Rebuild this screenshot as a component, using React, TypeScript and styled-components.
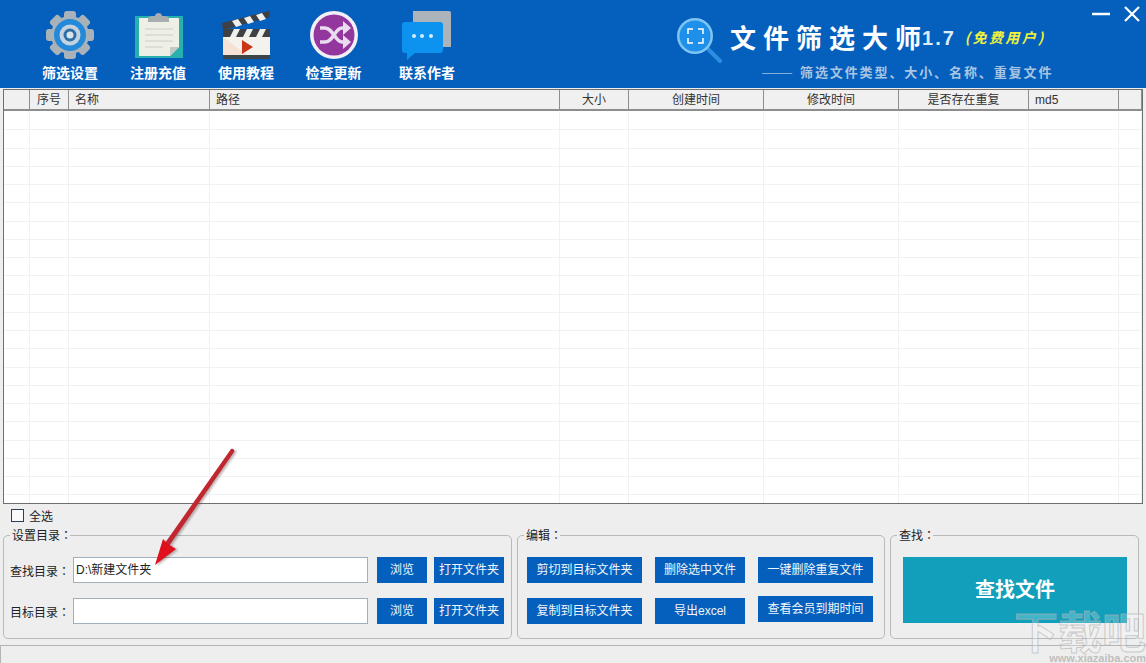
import React from 'react';
import styled, { createGlobalStyle } from 'styled-components';

const GlobalStyle = createGlobalStyle`
  html, body {
    margin: 0;
    padding: 0;
    background: #eeeeee;
  }
  body {
    font-family: 'Liberation Sans', 'Noto Sans CJK SC', sans-serif;
    font-size: 12px;
    color: #222;
  }
`

const Window = styled.div`
  position: relative;
  width: 1146px;
  height: 663px;
  overflow: hidden;
  background: #eeeeee;
  display: flex;
  flex-direction: column;
`

const Header = styled.div`
  position: relative;
  height: 88px;
  flex: none;
  background: #0560bd;
  display: flex;
  padding-left: 26px;
`

const ToolItem = styled.div<{ $w: number }>`
  width: ${p => p.$w}px;
  display: flex;
  flex-direction: column;
  align-items: center;
  flex: none;

  & svg {
    margin-top: 10px;
    height: 50px;
    width: 54px;
  }

  & span {
    margin-top: 5px;
    color: #fff;
    font-size: 14px;
    font-weight: 700;
    line-height: 16px;
    white-space: nowrap;
  }
`

const Logo = styled.div`
  margin-left: auto;
  width: 470px;
  flex: none;
  display: flex;
  flex-direction: column;
`

const LogoTop = styled.div`
  display: flex;
  align-items: center;
  height: 50px;
  margin-top: 14px;

  & svg {
    width: 48px;
    height: 50px;
    flex: none;
  }
`

const LogoTitle = styled.div`
  margin: 0 0 6px 6px;
  color: #fff;
  font-family: 'Noto Sans CJK SC', sans-serif;
  font-size: 26px;
  font-weight: 700;
  letter-spacing: 7px;
  white-space: nowrap;
`

const Version = styled.span`
  font-family: 'Liberation Sans', sans-serif;
  font-size: 20px;
  letter-spacing: 2px;
  margin-left: -6px;
  color: #dcecf8;
  vertical-align: 3px;
`

const Edition = styled.span`
  margin-left: 9px;
  color: #f2f23c;
  font-size: 14px;
  font-style: italic;
  letter-spacing: 2.4px;
  vertical-align: 5px;
`

const LogoSub = styled.div`
  margin-top: -2px;
  margin-left: 86px;
  color: #a9c5e2;
  font-size: 13px;
  font-weight: 700;
  letter-spacing: 1.9px;
  white-space: nowrap;
`

const SubDash = styled.span`
  font-size: 15px;
  font-weight: 400;
  letter-spacing: 0;
  margin-right: 8px;
  color: #86aeda;
`

const WinButtons = styled.div`
  position: absolute;
  top: 5px;
  right: 5px;
  display: flex;
  gap: 13px;
  align-items: center;

  & svg {
    width: 18px;
    height: 18px;
  }
`

const Table = styled.div`
  margin: 1px 3px 0 3px;
  height: 415px;
  flex: none;
  background: #fff;
  border: 1px solid #6f6f6f;
  overflow: hidden;
  box-sizing: border-box;
`

const cols = '26px 39px 141px 350px 69px 135px 135px 130px 90px 1fr'

const HeaderRow = styled.div`
  display: grid;
  grid-template-columns: ${cols};
  height: 21px;
  background: #f0f0f0;
  border-bottom: 2px solid #8e8e8e;
  box-sizing: border-box;
`

const HeaderCell = styled.div<{ $left?: boolean }>`
  border-right: 1px solid #8e8e8e;
  font-size: 12px;
  line-height: 21px;
  color: #333;
  text-align: ${p => (p.$left ? 'left' : 'center')};
  padding-left: ${p => (p.$left ? '6px' : '0')};
  box-sizing: border-box;
  white-space: nowrap;
`

const Rows = styled.div`
  padding-top: 1px;
`

const Row = styled.div`
  display: grid;
  grid-template-columns: ${cols};
  height: 18.25px;
  border-bottom: 1px solid #f1f1f1;
  box-sizing: border-box;
`

const Cell = styled.div`
  border-right: 1px solid #f1f1f1;
`

const SelectAll = styled.label`
  display: flex;
  align-items: center;
  height: 24px;
  padding: 0 0 2px 11px;
  box-sizing: border-box;
  gap: 5px;
  font-size: 12px;
  flex: none;
`

const CheckBox = styled.span`
  width: 11px;
  height: 11px;
  border: 1px solid #2b3f5a;
  background: #fafafa;
  display: block;
`

const Panels = styled.div`
  display: flex;
  padding-left: 3px;
  gap: 5px;
  flex: none;
  height: 116px;
`

const Panel = styled.fieldset<{ $w: number }>`
  width: ${p => p.$w}px;
  margin: 0;
  padding: 0;
  border: 1px solid #b9b9b9;
  border-radius: 5px;
  box-sizing: border-box;
  height: 111px;
  min-width: 0;
`

const Legend = styled.legend`
  padding: 0 2px;
  margin-left: 6px;
  font-size: 12px;
  line-height: 14px;
  white-space: nowrap;
`

const Colon = styled.span`
  font-family: 'Noto Sans CJK TC', sans-serif;
  margin-right: -4px;
`

const DirRows = styled.div`
  display: flex;
  flex-direction: column;
  gap: 15px;
  padding: 14px 0 0 6px;
`

const DirRow = styled.div`
  display: flex;
  align-items: center;
  height: 26px;
`

const DirLabel = styled.div`
  width: 63px;
  flex: none;
  font-size: 12px;
`

const TextBox = styled.div`
  width: 295px;
  height: 26px;
  flex: none;
  box-sizing: border-box;
  background: #fff;
  border: 1px solid #9eb0bd;
  font-size: 12px;
  line-height: 24px;
  padding-left: 2px;
  color: #222;
`

const BlueButton = styled.div<{ $w: number; $ml?: number; $up?: number }>`
  width: ${p => p.$w}px;
  margin-left: ${p => p.$ml ?? 0}px;
  margin-top: ${p => -(p.$up ?? 0)}px;
  height: 26px;
  flex: none;
  background: #0560bd;
  color: #f2f6fb;
  font-size: 12px;
  line-height: 26px;
  text-align: center;
  white-space: nowrap;
`

const EditGrid = styled.div`
  display: grid;
  grid-template-columns: 115px 90px 115px;
  column-gap: 13px;
  row-gap: 15px;
  align-items: start;
  padding: 14px 0 0 9px;
`

const SearchButton = styled.div`
  margin: 14px 0 0 12px;
  width: 224px;
  height: 66px;
  background: #119fbb;
  color: #fff;
  font-size: 20px;
  font-weight: 700;
  line-height: 66px;
  text-align: center;
`

const StatusBar = styled.div`
  flex: none;
  height: 18px;
  margin-top: 1px;
  border-top: 1px solid #b4b4b4;
  border-left: 1px solid #b4b4b4;
`

const Arrow = styled.svg`
  position: absolute;
  left: 140px;
  top: 440px;
  width: 110px;
  height: 140px;
  pointer-events: none;
  filter: drop-shadow(2px 1px 1px rgba(90, 60, 60, 0.4));
`

const Watermark = styled.div`
  position: absolute;
  right: 0;
  bottom: 0;
  text-align: right;
  font-family: 'Noto Sans CJK SC', sans-serif;
  pointer-events: none;

  & b {
    display: block;
    font-size: 44px;
    line-height: 46px;
    font-weight: 700;
    color: rgba(255, 255, 255, 0.22);
    -webkit-text-stroke: 1px rgba(175, 175, 175, 0.6);
  }

  & i {
    display: block;
    font-family: 'Liberation Sans', sans-serif;
    font-style: normal;
    font-weight: 700;
    font-size: 11px;
    line-height: 10px;
    color: rgba(175, 175, 175, 0.75);
  }
`

const GearIcon = () => (
  <svg viewBox="0 0 54 50">
    <g fill="#a9b1b9">
      {[0, 45, 90, 135, 180, 225, 270, 315].map(a => (
        <rect key={a} x="21" y="1" width="12" height="12" rx="3" transform={`rotate(${a} 27 25)`} />
      ))}
      <circle cx="27" cy="25" r="19" />
    </g>
    <circle cx="27" cy="25" r="16" fill="#2589d9" />
    <circle cx="27" cy="25" r="10.5" fill="#c3d2de" />
    <circle cx="27" cy="25" r="6.5" fill="#2b6fa8" />
    <circle cx="27" cy="25" r="3.5" fill="#dbe4ea" />
  </svg>
)

const ClipboardIcon = () => (
  <svg viewBox="0 0 54 50">
    <rect x="4" y="6" width="48" height="42" fill="#27b0ad" />
    <path d="M8 8h40v29l-9 9H8z" fill="#eef0e6" />
    <path d="M39 46l9-9h-9z" fill="#c4c8c4" />
    <path d="M17 9c0-3 3-3 7-3 0-4 7-4 7 0 4 0 7 0 7 3v3H17z" fill="#a8aeb0" />
    <g stroke="#c9cdc6" strokeWidth="1.2">
      <path d="M14 19h28M14 25h28M14 31h28M14 37h18" />
    </g>
  </svg>
)

const ClapIcon = () => (
  <svg viewBox="0 0 54 50">
    <path d="M3 13L50 1l1 6L4 20z" fill="#3e4043" />
    <path d="M13 11l4 6 6-2-4-6zM25 8l4 6 6-2-4-6zM37 5l4 6 6-2-4-6z" fill="#eef0ee" />
    <rect x="4" y="19" width="47" height="8" fill="#3e4043" />
    <path d="M11 27l4-8h6l-4 8zM24 27l4-8h6l-4 8zM37 27l4-8h6l-4 8z" fill="#eef0ee" />
    <rect x="4" y="27" width="47" height="18" fill="#f3f2ec" />
    <path d="M4 27l24 18H4z" fill="#f7d3c4" opacity="0.55" />
    <rect x="4" y="45" width="47" height="4" fill="#3c4648" />
    <path d="M23 30l11 7-11 7z" fill="#c9371a" />
  </svg>
)

const ShuffleIcon = () => (
  <svg viewBox="0 0 54 50">
    <circle cx="27" cy="25" r="24" fill="#f3f0f5" />
    <circle cx="27" cy="25" r="20.5" fill="#93379f" />
    <g fill="none" stroke="#eadcf0" strokeWidth="3.5">
      <path d="M13 18h5c8 0 10 14 17 14h3" />
      <path d="M13 32h5c8 0 10-14 17-14h3" />
    </g>
    <path d="M36 11l8 7-8 7zM36 25l8 7-8 7z" fill="#eadcf0" />
  </svg>
)

const ChatIcon = () => (
  <svg viewBox="0 0 54 50">
    <path d="M13 1h36a2 2 0 0 1 2 2v34H13z" fill="#aab4ba" />
    <path d="M5 12h35a3 3 0 0 1 3 3v25a3 3 0 0 1-3 3H15l-8 7v-7H5a3 3 0 0 1-3-3V15a3 3 0 0 1 3-3z" fill="#0c92ef" />
    <circle cx="14" cy="26" r="2" fill="#d5ecfb" />
    <circle cx="22" cy="26" r="2" fill="#d5ecfb" />
    <circle cx="31" cy="26" r="2" fill="#d5ecfb" />
  </svg>
)

const tools = [
  { label: '筛选设置', w: 88, icon: <GearIcon /> },
  { label: '注册充值', w: 88, icon: <ClipboardIcon /> },
  { label: '使用教程', w: 88, icon: <ClapIcon /> },
  { label: '检查更新', w: 87, icon: <ShuffleIcon /> },
  { label: '联系作者', w: 100, icon: <ChatIcon /> },
]

const headers: [string, boolean?][] = [
  [''],
  ['序号'],
  ['名称', true],
  ['路径', true],
  ['大小'],
  ['创建时间'],
  ['修改时间'],
  ['是否存在重复'],
  ['md5', true],
  [''],
]

const App = () => {
  return (
    <Window>
      <GlobalStyle />
      <Header>
        {tools.map(t => (
          <ToolItem key={t.label} $w={t.w}>
            {t.icon}
            <span>{t.label}</span>
          </ToolItem>
        ))}
        <Logo>
          <LogoTop>
            <svg viewBox="0 0 48 50">
              <line x1="31" y1="34" x2="44" y2="47" stroke="#2b8fe0" strokeWidth="4" strokeLinecap="round" />
              <circle cx="19" cy="22" r="18" fill="#7fc4f2" />
              <circle cx="19" cy="22" r="15.5" fill="#1e90ea" />
              <path d="M12 20v-5h5M22 15h5v5M27 24v5h-5M17 29h-5v-5" fill="none" stroke="#fff" strokeWidth="1.5" />
            </svg>
            <LogoTitle>
              文件筛选大师<Version>1.7</Version>
              <Edition>(免费用户)</Edition>
            </LogoTitle>
          </LogoTop>
          <LogoSub><SubDash>——</SubDash>筛选文件类型、大小、名称、重复文件</LogoSub>
        </Logo>
        <WinButtons>
          <svg viewBox="0 0 18 18"><path d="M0 9h18" stroke="#fff" strokeWidth="2.5" /></svg>
          <svg viewBox="0 0 18 18"><path d="M2 2l14 14M16 2L2 16" stroke="#fff" strokeWidth="2.2" /></svg>
        </WinButtons>
      </Header>
      <Table>
        <HeaderRow>
          {headers.map(([h, left], i) => (
            <HeaderCell key={i} $left={left}>{h}</HeaderCell>
          ))}
        </HeaderRow>
        <Rows>
          {Array.from({ length: 22 }).map((_, r) => (
            <Row key={r}>
              {headers.map((_, c) => <Cell key={c} />)}
            </Row>
          ))}
        </Rows>
      </Table>
      <SelectAll>
        <CheckBox />
        全选
      </SelectAll>
      <Panels>
        <Panel $w={509}>
          <Legend>设置目录<Colon>：</Colon></Legend>
          <DirRows>
            <DirRow>
              <DirLabel>查找目录<Colon>：</Colon></DirLabel>
              <TextBox>D:\新建文件夹</TextBox>
              <BlueButton $w={50} $ml={9}>浏览</BlueButton>
              <BlueButton $w={70} $ml={7}>打开文件夹</BlueButton>
            </DirRow>
            <DirRow>
              <DirLabel>目标目录<Colon>：</Colon></DirLabel>
              <TextBox />
              <BlueButton $w={50} $ml={9}>浏览</BlueButton>
              <BlueButton $w={70} $ml={7}>打开文件夹</BlueButton>
            </DirRow>
          </DirRows>
        </Panel>
        <Panel $w={368}>
          <Legend>编辑<Colon>：</Colon></Legend>
          <EditGrid>
            <BlueButton $w={115}>剪切到目标文件夹</BlueButton>
            <BlueButton $w={90}>删除选中文件</BlueButton>
            <BlueButton $w={115}>一键删除重复文件</BlueButton>
            <BlueButton $w={115}>复制到目标文件夹</BlueButton>
            <BlueButton $w={90}>导出excel</BlueButton>
            <BlueButton $w={115} $up={2}>查看会员到期时间</BlueButton>
          </EditGrid>
        </Panel>
        <Panel $w={249}>
          <Legend>查找<Colon>：</Colon></Legend>
          <SearchButton>查找文件</SearchButton>
        </Panel>
      </Panels>
      <StatusBar />
      <Arrow viewBox="0 0 110 140">
        <path d="M91 9c2-1 4 1 3 3L29 106l-4-3z" fill="#c0272e" />
        <path d="M15 125l8-26 5 5 8 5z" fill="#e0101f" />
      </Arrow>
      <Watermark>
        <b>下载吧</b>
        <i>www.xiazaiba.com</i>
      </Watermark>
    </Window>
  )
}

export default App
